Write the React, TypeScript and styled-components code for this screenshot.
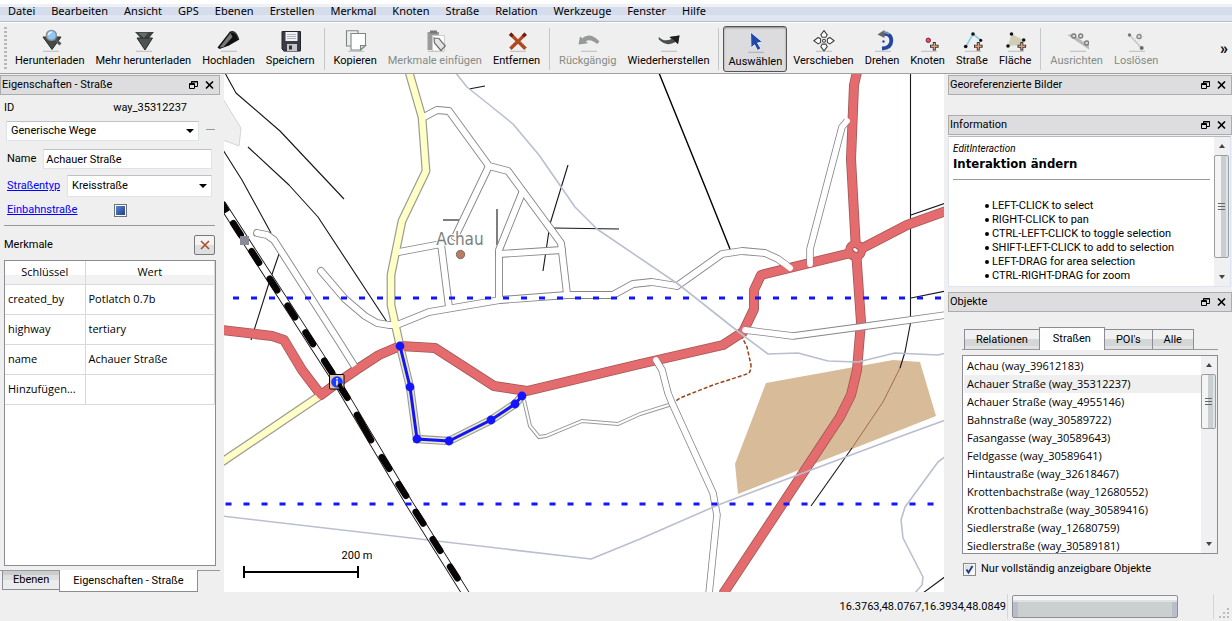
import React from 'react';
import styled, { createGlobalStyle, css } from 'styled-components';

const UI = 'Roboto, "Liberation Sans", sans-serif';
const TEXT = '"Open Sans", "Noto Sans", sans-serif';

const Global = createGlobalStyle`
  *, *::before, *::after { box-sizing: border-box; }
  body { margin: 0; background: #efefef; color: #000; font: 11px/14px ${UI}; }
  button, input, select { font: inherit; color: inherit; margin: 0; }
  ul { list-style: none; margin: 0; padding: 0; }
`;

const Window = styled.div`
  display: flex;
  flex-direction: column;
  height: 100vh;
  min-height: 560px;
  overflow: hidden;
`;

/* ---------- menu bar ---------- */

const MenuBar = styled.nav`
  display: flex;
  flex: none;
  height: 22px;
  border-bottom: 1px solid #b4bac6;
  background: linear-gradient(#fff 0 4px, #f0f1f4 4px 7px, #d5ddec 7px 15px, #dfe6f1 15px);
`;

const MenuItem = styled.button`
  border: 0;
  padding: 0 8px;
  background: none;
  font-family: "Noto Sans", "Open Sans", sans-serif;
  line-height: 18px;
`;

/* ---------- toolbar ---------- */

const ToolBar = styled.div`
  display: flex;
  flex: none;
  align-items: center;
  gap: 1px;
  height: 52px;
  padding: 1px 4px 0;
  border-top: 1px solid #fff;
  border-bottom: 1px solid #a0a0a0;
`;

const Grip = styled.span`
  width: 3px;
  height: 44px;
  margin-right: 2px;
  background: repeating-linear-gradient(#b8b8b8 0 2px, transparent 2px 4px);
`;

const ToolButton = styled.button<{ $active?: boolean }>`
  display: flex;
  flex: none;
  flex-direction: column;
  align-items: center;
  gap: 1px;
  height: 46px;
  padding: 2px 4px 0;
  border: 1px solid transparent;
  border-radius: 3px;
  background: none;
  &:disabled { color: #858b85; }
  ${p => p.$active && css`
    padding-top: 3px;
    border-color: #555;
    background: #dcdcde;
    box-shadow: inset 0 1px 2px #888;
  `}
`;

const ToolSeparator = styled.span`
  flex: none;
  width: 1px;
  height: 42px;
  margin: 0 3px;
  background: #c4c8c8;
`;

const Overflow = styled.button`
  margin-left: auto;
  padding: 0;
  border: 0;
  background: none;
  font-size: 16px;
  font-weight: 700;
`;

/* ---------- docks ---------- */

const Main = styled.main`
  display: grid;
  flex: 1;
  grid-template-columns: 224px minmax(0, 1fr) 288px;
  min-height: 0;
`;

const LeftDock = styled.aside`
  display: flex;
  flex-direction: column;
  min-height: 0;
  padding-top: 1px;
`;

const RightDock = styled(LeftDock)`
  padding-left: 4px;
`;

const DockTitle = styled.header`
  display: flex;
  flex: none;
  align-items: center;
  height: 20px;
  padding: 0 1px;
  border: 1px solid #acacac;
  background: #dddddf;
`;

const DockName = styled.h2`
  flex: 1;
  margin: 0;
  font-size: 11px;
  font-weight: 400;
`;

const DockButton = styled.button`
  display: flex;
  padding: 0 4px 0 3px;
  border: 0;
  background: none;
`;

const LeftTitle = styled.div`
  margin-right: 4px;
`;

const GeoDock = styled.section`
  flex: none;
  height: 40px;
`;

/* ---------- property form ---------- */

const Properties = styled.div`
  display: flex;
  flex: 1;
  flex-direction: column;
  min-height: 0;
  padding: 5px 8px 4px 4px;
`;

const IdRow = styled.div`
  display: flex;
  justify-content: space-between;
  padding: 0 29px 0 0;
  line-height: 16px;
`;

const FormRow = styled.div`
  display: flex;
  align-items: center;
  gap: 7px;
  margin: 0 0 6px 3px;
  padding-right: 4px;
`;

const PresetRow = styled(FormRow)`
  margin: 5px 0 8px 2px;
  padding: 0;
`;

const TextField = styled.input`
  flex: 1;
  min-width: 0;
  height: 20px;
  padding: 0 2px;
  border: 1px solid #dde3e9;
  border-top-color: #bdc1c8;
  background: #fff;
`;

const SelectBox = styled.span<{ $tall?: boolean }>`
  display: grid;
  flex: 1;
  align-items: center;
  height: ${p => (p.$tall ? 22 : 20)}px;
  border: 1px solid #dde3e9;
  border-top-color: #bdc1c8;
  background: #fff;
  > * { grid-area: 1 / 1; }
  > svg { justify-self: end; margin-right: 4px; pointer-events: none; }
`;

const Select = styled.select`
  width: 100%;
  padding: 0 4px;
  border: 0;
  background: none;
  appearance: none;
`;

const HelpLink = styled.a`
  color: #00f;
`;

const MoreLine = styled.span`
  width: 9px;
  height: 1px;
  margin: 0 1px 3px 0;
  background: #999;
`;

const TriState = styled.input`
  appearance: none;
  width: 13px;
  height: 13px;
  margin-left: 30px;
  border: 1px solid #707078;
  background: linear-gradient(135deg, #5d86d0, #1d3f8f) center / 9px 9px no-repeat #fff;
`;

const Rule = styled.hr`
  flex: none;
  width: calc(100% - 1px);
  margin: 2px 0 9px;
  border: 0;
  border-top: 1px solid #999;
`;

const TagHead = styled.div`
  display: flex;
  flex: none;
  align-items: center;
  justify-content: space-between;
  margin: 0 1px 5px 0;
`;

const DeleteTag = styled.button`
  display: grid;
  place-items: center;
  width: 21px;
  height: 20px;
  padding: 0;
  border: 1px solid #777;
  border-radius: 2px;
  background: linear-gradient(#f4f4f4 50%, #dcdedf 50%);
`;

const TagFrame = styled.div`
  flex: 1;
  min-height: 0;
  overflow: hidden;
  border: 1px solid #8c8c96;
  background: #fff;
`;

const TagTable = styled.table`
  width: 100%;
  table-layout: fixed;
  border-collapse: collapse;
  font-family: ${TEXT};
  th, td { overflow: hidden; white-space: nowrap; border: solid #d9d9d9; border-width: 0 1px 1px 0; }
  th {
    height: 23px;
    padding: 0;
    font-weight: 400;
    background: linear-gradient(#fff 60%, #f2f2f2 60%);
  }
  th:first-child { width: 80px; }
  td { height: 30px; padding: 0 3px; }
`;

const DockTabs = styled.div`
  display: flex;
  flex: none;
  align-items: flex-start;
  height: 22px;
  margin-right: 4px;
  padding-left: 2px;
  border-top: 1px solid #999;
`;

const DockTab = styled.button<{ $active?: boolean }>`
  height: ${p => (p.$active ? 22 : 19)}px;
  margin: ${p => (p.$active ? '-1px 0 0' : '0')};
  padding: 0 ${p => (p.$active ? 13 : 10)}px;
  border: 1px solid #8c8c96;
  border-top: 0;
  border-right-width: ${p => (p.$active ? 1 : 0)}px;
  background: ${p => (p.$active ? '#fff' : 'linear-gradient(#c9cdcd 4px, #dededf 4px 9px, #ececec 9px)')};
`;

/* ---------- information ---------- */

const InfoDock = styled.section`
  flex: none;
  height: 177px;
`;

const InfoFrame = styled.div`
  display: flex;
  height: 151px;
  margin: 1px 1px 0 0;
  border: 1px solid #dde6f0;
  border-top-color: #b4b8c0;
  background: #fff;
`;

const InfoText = styled.div`
  flex: 1;
  overflow: hidden;
  padding: 5px 4px 0;
`;

const Kind = styled.em`
  display: block;
  font-size: 10px;
`;

const InfoTitle = styled.h3`
  margin: 0;
  font: 700 13px/16px "DejaVu Sans Condensed", "DejaVu Sans", sans-serif;
`;

const InfoRule = styled.hr`
  margin: 7px 0 19px;
  border: 0;
  border-top: 1px solid #999;
`;

const Hints = styled.ul`
  padding-left: 32px;
  li { display: flex; align-items: center; gap: 3px; white-space: nowrap; }
  li::before { content: ''; width: 4px; height: 4px; border-radius: 50%; background: #000; }
`;

const ScrollBar = styled.div`
  display: flex;
  flex: none;
  flex-direction: column;
  width: 16px;
  background: #f0f0f2;
`;

const ScrollArrow = styled.button`
  display: grid;
  flex: none;
  place-items: center;
  height: 18px;
  padding: 0;
  border: 0;
  background: none;
`;

const Thumb = styled.div<{ $size: number }>`
  display: grid;
  place-items: center;
  height: ${p => p.$size}px;
  margin: 0 1px 0 0;
  border: 1px solid #999ea0;
  border-radius: 2px;
  background: linear-gradient(90deg, #f4f4f5 50%, #c9cfd1 50% 85%, #dfe3ea 85%);
`;

const ScrollGap = styled.span`
  flex: 1;
`;

/* ---------- objects ---------- */

const ObjectsDock = styled.section`
  display: flex;
  flex: 1;
  flex-direction: column;
  min-height: 0;
`;

const ObjectsBody = styled.div`
  display: flex;
  flex: 1;
  flex-direction: column;
  min-height: 0;
  padding: 15px 14px 16px;
`;

const Tabs = styled.div`
  display: flex;
  flex: none;
  align-items: flex-end;
  height: 23px;
  padding-left: 2px;
  border-bottom: 1px solid #999;
`;

const Tab = styled.button<{ $active?: boolean }>`
  height: ${p => (p.$active ? 23 : 20)}px;
  margin: ${p => (p.$active ? '0 0 -1px' : '0')};
  padding: 0 ${p => (p.$active ? 13 : 11)}px;
  border: 1px solid #8c8c96;
  border-bottom: 0;
  background: ${p => (p.$active ? '#fff' : 'linear-gradient(#f1f1f2 50%, #d3d7d8 50% 85%, #e2e2e2 85%)')};
  & + & { margin-left: ${p => (p.$active ? -1 : 0)}px; }
`;

const ListFrame = styled.div`
  display: flex;
  flex: 1;
  min-height: 0;
  margin: 5px 0 0;
  border: 1px solid #8c8c96;
  background: #fff;
`;

const ObjectList = styled.ul`
  flex: 1;
  overflow: hidden;
  padding: 1px 0 0 1px;
  font-family: ${TEXT};
`;

const ObjectRow = styled.li<{ $current?: boolean }>`
  height: 18px;
  padding-left: 3px;
  line-height: 18px;
  white-space: nowrap;
  background: ${p => (p.$current ? '#efefef' : 'none')};
`;

const CheckRow = styled.label`
  display: flex;
  flex: none;
  align-items: center;
  gap: 5px;
  margin: 8px 0 0 1px;
`;

const CheckFrame = styled.span`
  display: grid;
  > * { grid-area: 1 / 1; }
  > svg { pointer-events: none; }
`;

const CheckBox = styled.input`
  appearance: none;
  width: 13px;
  height: 13px;
  border: 1px solid #85888c;
  background: linear-gradient(135deg, #d4d8dd, #fff) center / 9px 9px no-repeat #f7f7f7;
`;

/* ---------- status bar ---------- */

const StatusBar = styled.footer`
  display: flex;
  flex: none;
  align-items: center;
  justify-content: flex-end;
  height: 29px;
  padding-right: 2px;
`;

const StatusLine = styled.span`
  width: 1px;
  height: 25px;
  margin: 0 4px 0 1px;
  background: #d6d6d6;
`;

const Progress = styled.div`
  width: 166px;
  height: 23px;
  margin-right: 34px;
  border: 1px solid #8c9094;
  border-radius: 2px;
  background: linear-gradient(#f4f4f4 4px, #e0e2e2 4px 6px, transparent 6px),
    linear-gradient(90deg, #b9bcca 5px, #cad0d0 5px calc(100% - 5px), #b9bcca calc(100% - 5px));
`;

const SizeGrip = styled.svg`
  align-self: flex-end;
  margin-bottom: 1px;
`;

const MapView = styled.svg`
  display: block;
  width: 100%;
  height: 100%;
  background: #fff;
`;

/* ---------- small glyphs ---------- */

const Arrow = ({ up, wide }: { up?: boolean; wide?: boolean }) => (
  <svg width="8" height="4" viewBox="0 0 8 4" aria-hidden="true">
    <path d={up ? 'M1 4L4 0L7 4Z' : wide ? 'M0 0H8L4 4Z' : 'M1 0H7L4 4Z'} fill={wide ? '#000' : '#444'} />
  </svg>
);

const ThumbMarks = () => (
  <svg width="8" height="9" viewBox="0 0 8 9" aria-hidden="true">
    <path d="M0 1.5H7M0 4.5H7M0 7.5H7" stroke="#666" />
  </svg>
);

const Title = ({ children }: { children: string }) => (
  <DockTitle>
    <DockName>{children}</DockName>
    <DockButton aria-label="Abdocken">
      <svg width="9" height="9" viewBox="0 0 9 9" fill="none" stroke="#000">
        <path d="M2.5 2V0.5H8.5V5.5H6M2 1H9M0.5 2.5H5.5V7.5H0.5ZM0 3.5H6" />
      </svg>
    </DockButton>
    <DockButton aria-label="Schließen">
      <svg width="9" height="9" viewBox="0 0 9 9" stroke="#000" strokeWidth="1.6">
        <path d="M1 0.5L8 7.500M8 0.5L1 7.500" />
      </svg>
    </DockButton>
  </DockTitle>
);

const Scroll = ({ size }: { size: number }) => (
  <ScrollBar>
    <ScrollArrow aria-label="Nach oben"><Arrow up /></ScrollArrow>
    <Thumb $size={size}><ThumbMarks /></Thumb>
    <ScrollGap />
    <ScrollArrow aria-label="Nach unten"><Arrow /></ScrollArrow>
  </ScrollBar>
);

/* ---------- toolbar drawings ---------- */

const Shadow = () => <path d="M5 22.3H21" stroke="#000" strokeOpacity=".22" />;
const Plus = ({ x }: { x: number }) => (
  <g>
    <path d={`M${x} 13V21.5M${x - 4.3} 17.3H${x + 4.3}`} stroke="#333" strokeWidth="3" />
    <path d={`M${x} 14V20.5M${x - 3.3} 17.3H${x + 3.3}`} stroke="#e09a7c" strokeWidth="1.4" />
  </g>
);

const art: Record<string, React.ReactNode> = {
  download: <>
    <path d="M5 8H23L14 20.5Z" fill="#444a46" stroke="#2a2e2c" />
    <path d="M17 10L22.5 15.5" stroke="#555" strokeWidth="3" />
    <circle cx="13.4" cy="6.4" r="5" fill="#8fc8f6" stroke="#8a8e92" strokeWidth="1.4" />
    <path d="M10.5 6A3 3 0 0 1 14 3.2" stroke="#e8f6ff" strokeWidth="1.5" fill="none" />
  </>,
  more: <>
    <path d="M4 3H23L14 14Z" fill="#3c423e" />
    <path d="M6 9H21.5L14 21Z" fill="#4e5450" stroke="#262a28" />
    <path d="M7 3.8H17L13 9Z" fill="#666c68" />
  </>,
  upload: <>
    <path d="M1.5 18.5L14 2.5Q20 0 23.3 10.5L13 16.5L3.5 20Z" fill="#111" />
    <path d="M3.5 18.5L14.5 4L16.5 8L7.5 18Z" fill="#777" />
    <path d="M15 3Q21 3 22.3 10" stroke="#444" fill="none" />
  </>,
  save: <>
    <path d="M4 2.5H22.5V22H6L4 20Z" fill="#3c3c48" stroke="#24242c" />
    <path d="M7.5 3H19.5V12H7.5Z" fill="#f1f2f5" />
    <path d="M9 5.5H18M9 7.5H18M9 9.5H18" stroke="#b0b4bc" />
    <path d="M9 15H19V22H9Z" fill="#c4c6cc" />
    <path d="M11 16.5H14V20.5H11Z" fill="#30303a" />
  </>,
  copy: <g fill="#fff" stroke="#7e8682" strokeWidth="1.1">
    <path d="M3.5 1.8H15V17H3.5Z" fill="#eef0ee" />
    <path d="M8 4.5H22.5V16.5L17.5 21H8Z" />
    <path d="M22.5 16.5H17.5V21Z" fill="#ddd" />
  </g>,
  paste: <>
    <path d="M4.5 3H16V21H4.5Z" fill="#9a9a9a" />
    <path d="M7 1.5H14V4.5H7Z" fill="#777" />
    <path d="M9.5 6.5H21.5V22H9.5Z" fill="#fff" stroke="#ccc" />
    <path d="M11 9L16 9.5L22.3 17L18 21.5L11.5 14Z" fill="#e4e4e4" stroke="#707070" strokeWidth="1.2" />
  </>,
  remove: <>
    <path d="M6.2 3.5L13 10.2L19.5 3.5L21.8 6L15.3 12.3L21.8 18.5L19.2 21L13 14.8L6.5 21L4.2 18.5L10.5 12.3L4 6Z" fill="#b04820" />
    <path d="M6.2 3.5L9 6.2L6.5 8.3L4 6ZM19.5 3.5L21.8 6L19.2 8.3L16.8 6.2Z" fill="#701c14" />
  </>,
  undo: <path d="M2.500 15.500L4 7.500L6.300 9.200Q14 2.500 23.500 12.500L21 15Q14.500 9.500 9.800 12.300L12 14.300Z" fill="#969a96" />,
  redo: <>
    <path d="M3 8Q8 13.5 15.5 10L13.5 8L23.5 6.5L22 15L19.5 13Q10 18.5 2.5 10Z" fill="#4a504e" />
    <path d="M13.5 8L23.5 6.5L22 15L17 10.5Z" fill="#1c1e22" />
  </>,
  select: <path d="M7.5 2L19.5 12L14.500 13L18 18.500L14.500 20.500L11.500 14.800L8 18Z" fill="#2248a8" stroke="#e8ecf8" strokeWidth="1" />,
  move: <g fill="#fff" stroke="#444" strokeWidth="1.1">
    {[0, 90, 180, 270].map(a => (
      <path key={a} transform={`rotate(${a} 13 11.7)`} d="M13 1.6L16.2 5.8L14.8 8.3H11.2L9.8 5.8Z" />
    ))}
    <circle cx="13" cy="11.7" r="1.5" />
  </g>,
  rotate: <>
    <path d="M12.5 5Q21.5 4 21.3 12Q21 19 12 19.5" fill="none" stroke="#2448a0" strokeWidth="3.8" />
    <path d="M7.5 5.5L14.5 1V9Z" fill="#666" />
    <path d="M14 3.4Q17 3 19 5.2" fill="none" stroke="#7f8fb8" strokeWidth="2" />
    <circle cx="13.5" cy="12.5" r="1.2" fill="#2448a0" />
  </>,
  node: <>
    <circle cx="12.3" cy="11.3" r="2.2" fill="#f0506c" stroke="#702030" />
    <Plus x={18.3} />
  </>,
  street: <>
    <path d="M6 17.3L13 5L20.7 11.3" fill="none" stroke="#8cd0f4" strokeWidth="1.8" />
    <g fill="#111"><circle cx="5.7" cy="17.5" r="1.8" /><circle cx="13" cy="5" r="1.8" /><circle cx="20.7" cy="11.3" r="1.6" /></g>
    <Plus x={18.3} />
  </>,
  area: <>
    <path d="M8.5 5L20.5 11L17.5 16L5 17Z" fill="#cfcdb4" />
    <g fill="#111"><circle cx="8.5" cy="5" r="1.8" /><circle cx="20.7" cy="11" r="1.8" /><circle cx="5" cy="17" r="1.8" /></g>
    <Plus x={18.8} />
  </>,
  align: <>
    <path d="M2.5 6L7 5L24 16.5V20.5Z" fill="#b8b8b8" />
    <g fill="#ddd" stroke="#7c7c7c" strokeWidth="1.3"><circle cx="8.8" cy="7" r="2" /><circle cx="15.7" cy="7" r="2" /><circle cx="21.6" cy="14" r="2" /></g>
  </>,
  detach: <>
    <path d="M5.5 6L17.5 19" stroke="#c4c8c8" strokeWidth="1.8" />
    <circle cx="5.5" cy="6" r="1.7" fill="#777" /><circle cx="17.7" cy="19" r="2" fill="#667066" />
    <path d="M10 11L18 3M14 13L20 7" stroke="#ddd" />
    <circle cx="15" cy="7.6" r="2.1" fill="#ddd" stroke="#858585" strokeWidth="1.3" />
  </>,
};

type Tool = { icon: string; label: string; disabled?: boolean; active?: boolean };
const toolGroups: Tool[][] = [
  [
    { icon: 'download', label: 'Herunterladen' },
    { icon: 'more', label: 'Mehr herunterladen' },
    { icon: 'upload', label: 'Hochladen' },
    { icon: 'save', label: 'Speichern' },
  ],
  [
    { icon: 'copy', label: 'Kopieren' },
    { icon: 'paste', label: 'Merkmale einfügen', disabled: true },
    { icon: 'remove', label: 'Entfernen' },
  ],
  [
    { icon: 'undo', label: 'Rückgängig', disabled: true },
    { icon: 'redo', label: 'Wiederherstellen' },
  ],
  [
    { icon: 'select', label: 'Auswählen', active: true },
    { icon: 'move', label: 'Verschieben' },
    { icon: 'rotate', label: 'Drehen' },
    { icon: 'node', label: 'Knoten' },
    { icon: 'street', label: 'Straße' },
    { icon: 'area', label: 'Fläche' },
  ],
  [
    { icon: 'align', label: 'Ausrichten', disabled: true },
    { icon: 'detach', label: 'Loslösen', disabled: true },
  ],
];

/* ---------- map ---------- */

const residential = [
  'M424 117L437 110L449 111L489 166L508 171L561 243L567 294',
  'M489 166L455 237',
  'M522 193L499 250V299',
  'M499 254L562 250',
  'M399 252L441 244L449 307',
  'M257 233L267 235L274 240L340 343L355 367',
  'M321 271L345 299L365 316L377 323L389 325L397 325L429 312L500 300L567 295L613 295L633 284L652 282L677 286L722 254L742 251L765 253L778 259L790 268',
];
const overRed = [
  'M847 121L842 127L810 249V264',
  'M745 330L793 336L860 327L946 315',
  'M656 360L662 370L668 393L672 403L713 493L717 515L709 594',
];
const primary = [
  'M222 330L272 336L284 340L302 370L321 395L337 383L359 368L379 355L400 346L435 348L494 386L527 391L640 364L723 345L743 332L754 309V290L761 275L855 252L907 225L946 211',
  'M857 72L854 85L851 159L856 250L861 322L857 370L851 395L840 417L807 467L723 594',
];
const secondary = ['M409 72L422 117L426 171L402 221L391 275V305L400 346', 'M321 395L222 462'];
const rivers = [
  'M455 72L467 87L492 107L513 124L539 155L575 207L597 229L678 284L740 333L768 354L798 353L828 361L858 362L895 353L938 355L946 353',
  'M222 516L591 559L640 539L718 505L907 434L946 420',
  'M946 456L938 462L905 507L901 520L903 538L923 577L922 585L914 594',
];
const thinLines = [
  'M225 73L236 93L280 131L344 199',
  'M248 147L289 185L318 217L387 322',
  'M223 150L242 180L271 233',
  'M279 254L269 283L251 340',
  'M469 89L485 86',
  'M443 220H461',
  'M568 165L550 224L543 271',
  'M497 209V245',
  'M553 228L619 229',
  'M910.500 74V323L905 352L900 368',
  'M911 215L946 203',
  'M911 298L946 291',
  'M852 448L811 506',
  'M946 576L923 593',
];
const sleepers: [number, number][] = [
  [237, 229], [255.3, 257], [273.5, 284.500], [291.3, 311.500], [309.3, 338.3], [328, 366.5], [343.7, 392],
  [385.5, 463], [402.3, 490], [419.5, 517.7], [436.5, 545], [453.8, 572.5],
];
const rail = 'M222 204L337 382L409 503L466 594';
const selected: [number, number][] = [[400, 346], [410, 387], [417, 439], [449, 441], [491, 420], [515, 404], [522, 396]];
const selectedPath = 'M' + selected.map(p => p.join(' ')).join('L');

const Lines = ({ d, color, width, round }: { d: string[]; color: string; width: number; round?: boolean }) => (
  <g stroke={color} strokeWidth={width} fill="none" strokeLinejoin="round" strokeLinecap={round ? 'round' : 'butt'}>
    {d.map(path => <path key={path} d={path} />)}
  </g>
);

const StreetMap = () => (
  <MapView viewBox="224 74 720 518" preserveAspectRatio="xMidYMid slice" role="img" aria-label="Karte von Achau">
    <path d="M223 99L241 128L239 146L223 140Z" fill="#efefef" stroke="#d4d4d4" />
    <path d="M766 383L893 360L920 362L936 416L738 494L735 464Z" fill="#d8bb98" />
    <Lines d={thinLines} color="#15151c" width={1.1} />
    <path d="M659 73L706 189L730 249" fill="none" stroke="#000" strokeWidth="1.4" />
    <path d="M900 368L883 402L852 448" fill="none" stroke="#a06a54" />
    <path d="M741 335L747 347L751 365Q751 373 747 374L713 385L680 398L673 403" fill="none" stroke="#984418" strokeWidth="1.5" strokeDasharray="4 2" />
    <path d="M524 400L530 426L539 437L546 436L582 421L618 424L640 414L672 404" fill="none" stroke="#999" strokeWidth="4" />
    <path d="M524 400L530 426L539 437L546 436L582 421L618 424L640 414L672 404" fill="none" stroke="#fff" strokeWidth="2" />
    <Lines d={residential} color="#85858a" width={7.8} round />
    <Lines d={secondary} color="#9a9c94" width={8.8} />
    <path d={selectedPath} fill="none" stroke="#9a9c94" strokeWidth="8.4" />
    <Lines d={primary} color="#a25654" width={10} />
    <circle cx="855.500" cy="250.500" r="10.500" fill="#a25654" />
    <Lines d={residential} color="#fff" width={6} round />
    <Lines d={secondary} color="#ffffc6" width={6.4} />
    <path d={selectedPath} fill="none" stroke="#e9e9cc" strokeWidth="6.2" />
    <Lines d={primary} color="#e46c6e" width={8.4} />
    <path d="M790 268L785 264" stroke="#fff" strokeWidth="6" strokeLinecap="round" />
    <circle cx="855.500" cy="250.500" r="9.700" fill="#e46c6e" />
    <ellipse cx="855.500" cy="250" rx="3" ry="2" transform="rotate(30 855.500 250)" fill="#fff" stroke="#a25654" />
    <Lines d={overRed} color="#85858a" width={7.4} />
    <Lines d={overRed} color="#fff" width={5.8} round />
    <Lines d={rivers} color="#b9bfce" width={1.6} />
    <path d={rail} fill="none" stroke="#15151c" strokeWidth="8" />
    <path d={rail} fill="none" stroke="#fff" strokeWidth="6.2" />
    <g stroke="#080404" strokeWidth="6.6">
      <path d="M221 202L227 212" />
      {sleepers.map(([x, y]) => <path key={x} strokeLinecap="round" d={`M${x - 3.7} ${y - 5.8}L${x + 3.7} ${y + 5.8}`} />)}
      <path strokeLinecap="round" d="M357 415L371 440" />
    </g>
    <path d="M233 298H944" stroke="#1414ff" strokeWidth="3" strokeDasharray="6 12" />
    <path d="M225.500 504H944" stroke="#1414ff" strokeWidth="3" strokeDasharray="6 12" />
    <rect x="240" y="236" width="9" height="9" fill="#8a8a96" />
    <path d={selectedPath} fill="none" stroke="#1414f5" strokeWidth="3" />
    {selected.map(([x, y]) => <circle key={x} cx={x} cy={y} r="4.4" fill="#1414ff" />)}
    <rect x="329.500" y="374.500" width="14.500" height="14.500" rx="1" fill="#e0c8a4" stroke="#000" />
    <circle cx="337" cy="382" r="5.8" fill="#1e3cff" />
    <path d="M337 378V379.500M337 380.500V385.500" stroke="#fff" strokeWidth="1.6" />
    <path d="M339 384L343 391" stroke="#080404" strokeWidth="4" />
    <text x="460" y="245" textAnchor="middle" fontFamily="DejaVu Sans Condensed, sans-serif" fontSize="17" fill="#7b7f80" stroke="#fff" strokeWidth="2" paintOrder="stroke">Achau</text>
    <circle cx="460.500" cy="254.500" r="4.200" fill="#b87c62" stroke="#6e5a50" strokeWidth=".8" />
    <path d="M244 572H358M244 566V578M358 566V578" stroke="#000" strokeWidth="2" />
    <text x="357" y="559" textAnchor="middle" fontFamily="Roboto, sans-serif" fontSize="11">200 m</text>
  </MapView>
);

const menus = ['Datei', 'Bearbeiten', 'Ansicht', 'GPS', 'Ebenen', 'Erstellen', 'Merkmal', 'Knoten', 'Straße', 'Relation', 'Werkzeuge', 'Fenster', 'Hilfe'];
const tags = [['created_by', 'Potlatch 0.7b'], ['highway', 'tertiary'], ['name', 'Achauer Straße'], ['Hinzufügen...', '']];
const hints = ['LEFT-CLICK to select', 'RIGHT-CLICK to pan', 'CTRL-LEFT-CLICK to toggle selection', 'SHIFT-LEFT-CLICK to add to selection', 'LEFT-DRAG for area selection', 'CTRL-RIGHT-DRAG for zoom'];
const objects = [
  'Achau (way_39612183)', 'Achauer Straße (way_35312237)', 'Achauer Straße (way_4955146)', 'Bahnstraße (way_30589722)',
  'Fasangasse (way_30589643)', 'Feldgasse (way_30589641)', 'Hintaustraße (way_32618467)', 'Krottenbachstraße (way_12680552)',
  'Krottenbachstraße (way_30589416)', 'Siedlerstraße (way_12680759)', 'Siedlerstraße (way_30589181)',
];

export default function App() {
  return (
    <Window>
      <Global />
      <MenuBar>{menus.map(m => <MenuItem key={m}>{m}</MenuItem>)}</MenuBar>
      <ToolBar role="toolbar">
        <Grip />
        {toolGroups.map((group, i) => (
          <React.Fragment key={i}>
            {i > 0 && <ToolSeparator />}
            {group.map(t => (
              <ToolButton key={t.icon} disabled={t.disabled} $active={t.active}>
                <svg width="24" height="24" viewBox="0 0 24 24" aria-hidden="true"><Shadow />{art[t.icon]}</svg>
                {t.label}
              </ToolButton>
            ))}
          </React.Fragment>
        ))}
        <Overflow aria-label="Weitere Werkzeuge">»</Overflow>
      </ToolBar>
      <Main>
        <LeftDock>
          <LeftTitle><Title>Eigenschaften - Straße</Title></LeftTitle>
          <Properties>
            <IdRow><span>ID</span><span>way_35312237</span></IdRow>
            <PresetRow>
              <SelectBox>
                <Select aria-label="Vorlage" defaultValue="g"><option value="g">Generische Wege</option></Select>
                <Arrow wide />
              </SelectBox>
              <MoreLine />
            </PresetRow>
            <FormRow>
              <label htmlFor="name">Name</label>
              <TextField id="name" defaultValue="Achauer Straße" />
            </FormRow>
            <FormRow>
              <HelpLink href="#strassentyp">Straßentyp</HelpLink>
              <SelectBox $tall>
                <Select aria-label="Straßentyp" defaultValue="k"><option value="k">Kreisstraße</option></Select>
                <Arrow wide />
              </SelectBox>
            </FormRow>
            <FormRow>
              <HelpLink href="#einbahn">Einbahnstraße</HelpLink>
              <TriState type="checkbox" aria-label="Einbahnstraße" />
            </FormRow>
            <Rule />
            <TagHead>
              <span>Merkmale</span>
              <DeleteTag aria-label="Merkmal löschen">
                <svg width="10" height="10" viewBox="0 0 10 10" stroke="#a84c28" strokeWidth="1.5"><path d="M1 1L9 9M9 1L1 9" /></svg>
              </DeleteTag>
            </TagHead>
            <TagFrame>
              <TagTable>
                <thead><tr><th>Schlüssel</th><th>Wert</th></tr></thead>
                <tbody>{tags.map(([k, v]) => <tr key={k}><td>{k}</td><td>{v}</td></tr>)}</tbody>
              </TagTable>
            </TagFrame>
          </Properties>
          <DockTabs>
            <DockTab>Ebenen</DockTab>
            <DockTab $active>Eigenschaften - Straße</DockTab>
          </DockTabs>
        </LeftDock>
        <StreetMap />
        <RightDock>
          <GeoDock><Title>Georeferenzierte Bilder</Title></GeoDock>
          <InfoDock>
            <Title>Information</Title>
            <InfoFrame>
              <InfoText>
                <Kind>EditInteraction</Kind>
                <InfoTitle>Interaktion ändern</InfoTitle>
                <InfoRule />
                <Hints>{hints.map(h => <li key={h}>{h}</li>)}</Hints>
              </InfoText>
              <Scroll size={103} />
            </InfoFrame>
          </InfoDock>
          <ObjectsDock>
            <Title>Objekte</Title>
            <ObjectsBody>
              <Tabs role="tablist">
                <Tab role="tab">Relationen</Tab>
                <Tab role="tab" $active>Straßen</Tab>
                <Tab role="tab">POI's</Tab>
                <Tab role="tab">Alle</Tab>
              </Tabs>
              <ListFrame>
                <ObjectList>{objects.map((o, i) => <ObjectRow key={o} $current={i === 1}>{o}</ObjectRow>)}</ObjectList>
                <Scroll size={55} />
              </ListFrame>
              <CheckRow>
                <CheckFrame>
                  <CheckBox type="checkbox" defaultChecked />
                  <svg width="13" height="13" viewBox="0 0 13 13" fill="none" stroke="#20387c" strokeWidth="1.8"><path d="M3.500 6.500L5.500 9.500L9.500 3" /></svg>
                </CheckFrame>
                Nur vollständig anzeigbare Objekte
              </CheckRow>
            </ObjectsBody>
          </ObjectsDock>
        </RightDock>
      </Main>
      <StatusBar>
        <span>16.3763,48.0767,16.3934,48.0849</span>
        <StatusLine />
        <Progress role="progressbar" aria-label="Fortschritt" />
        <StatusLine />
        <SizeGrip width="12" height="12" viewBox="0 0 12 12">
          <path d="M9 1H11M9 5H11M5 5H7M9 9H11M5 9H7M1 9H3" stroke="#bbb" strokeWidth="2" />
        </SizeGrip>
      </StatusBar>
    </Window>
  );
}
